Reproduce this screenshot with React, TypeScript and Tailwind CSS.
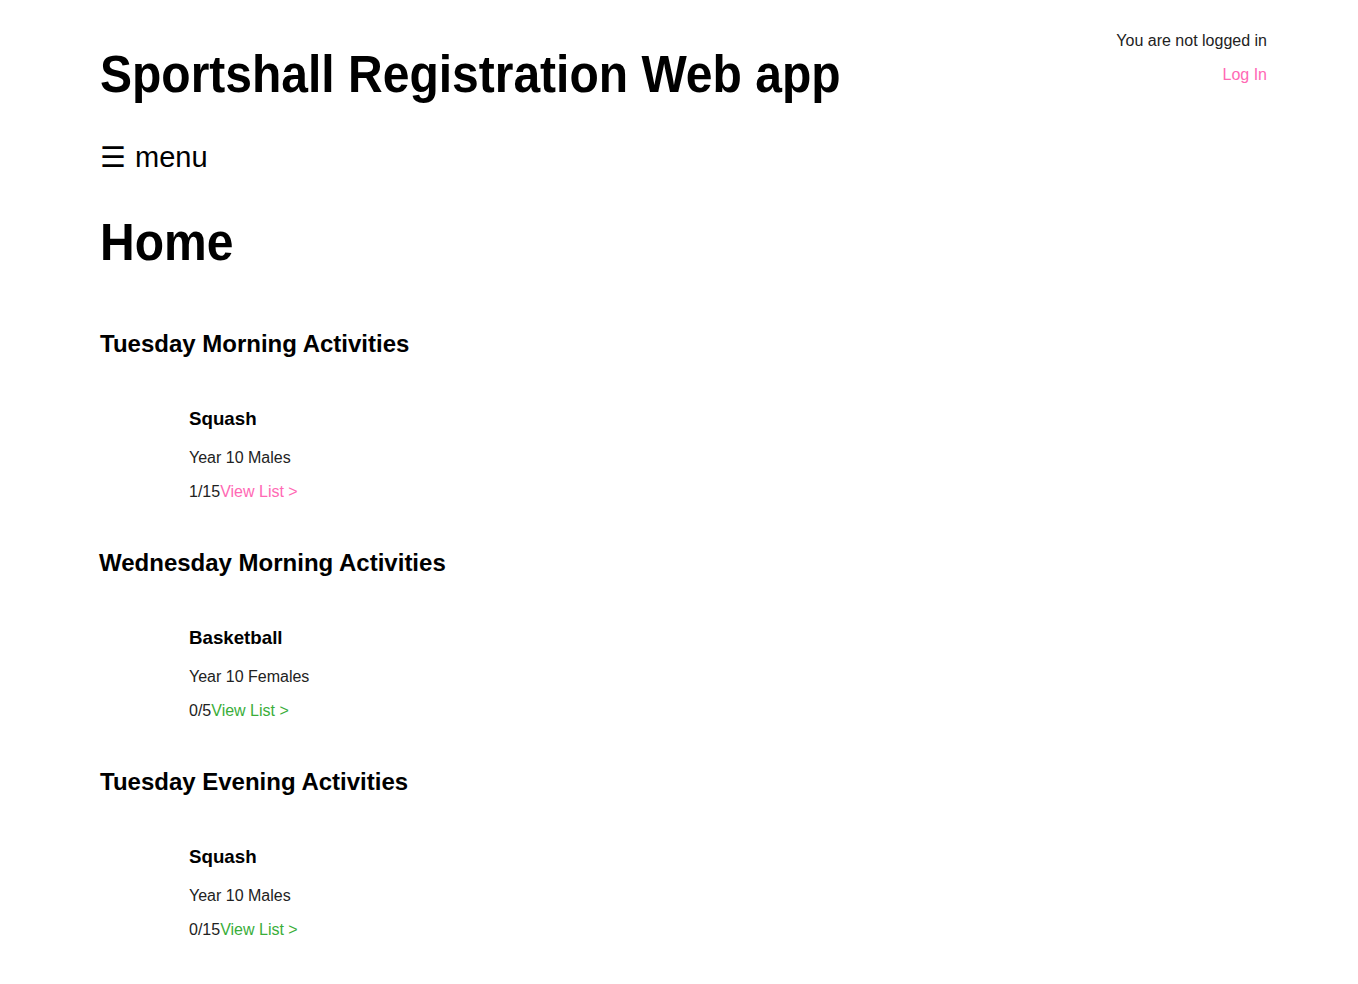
const activities = [
  {
    day: "Tuesday Morning Activities",
    name: "Squash",
    group: "Year 10 Males",
    count: "1/15",
    full: false,
    shift: false,
  },
  {
    day: "Wednesday Morning Activities",
    name: "Basketball",
    group: "Year 10 Females",
    count: "0/5",
    full: true,
    shift: true,
  },
  {
    day: "Tuesday Evening Activities",
    name: "Squash",
    group: "Year 10 Males",
    count: "0/15",
    full: true,
    shift: false,
  },
];

export default function App() {
  return (
    <div className="min-h-screen bg-white text-black font-['Liberation_Sans',Arial,sans-serif]">
      <div className="pl-[100px] pr-[91px] pt-[30px]">
        <header className="flex justify-between items-start">
          <h1 className="text-[48px] font-bold leading-none mt-[19px] scale-y-[1.08] origin-top">
            Sportshall Registration Web app
          </h1>
          <div className="mt-px flex flex-col items-end text-[16px] text-[#222]">
            <span className="leading-5">You are not logged in</span>
            <a href="#" className="mt-[14px] leading-5 text-[#ff69b4]">
              Log In
            </a>
          </div>
        </header>

        <nav className="mt-[46px] text-[29px] leading-none flex items-center gap-[9px]">
          <span>☰</span>
          <span>menu</span>
        </nav>

        <h1 className="mt-[45px] text-[48px] font-bold leading-none scale-y-[1.08] origin-top">Home</h1>

        <main className="mt-[65px] flex flex-col">
          {activities.map((a, i) => (
            <section key={i} className={i > 0 ? "mt-[47px]" : ""}>
              <h2 className={"text-[24px] font-bold leading-7 " + (a.shift ? "-ml-px" : "")}>{a.day}</h2>
              <div className="pl-[89px] mt-[49px]">
                <h3 className="text-[18.72px] font-bold leading-6">{a.name}</h3>
                <p className="mt-[17px] text-[16px] leading-5 text-[#222]">{a.group}</p>
                <p className="mt-[14px] text-[16px] leading-5 text-[#222]">
                  {a.count}
                  <a href="#" className={a.full ? "text-[#3aae3a]" : "text-[#ff69b4]"}>
                    View List &gt;
                  </a>
                </p>
              </div>
            </section>
          ))}
        </main>
      </div>
    </div>
  );
}
